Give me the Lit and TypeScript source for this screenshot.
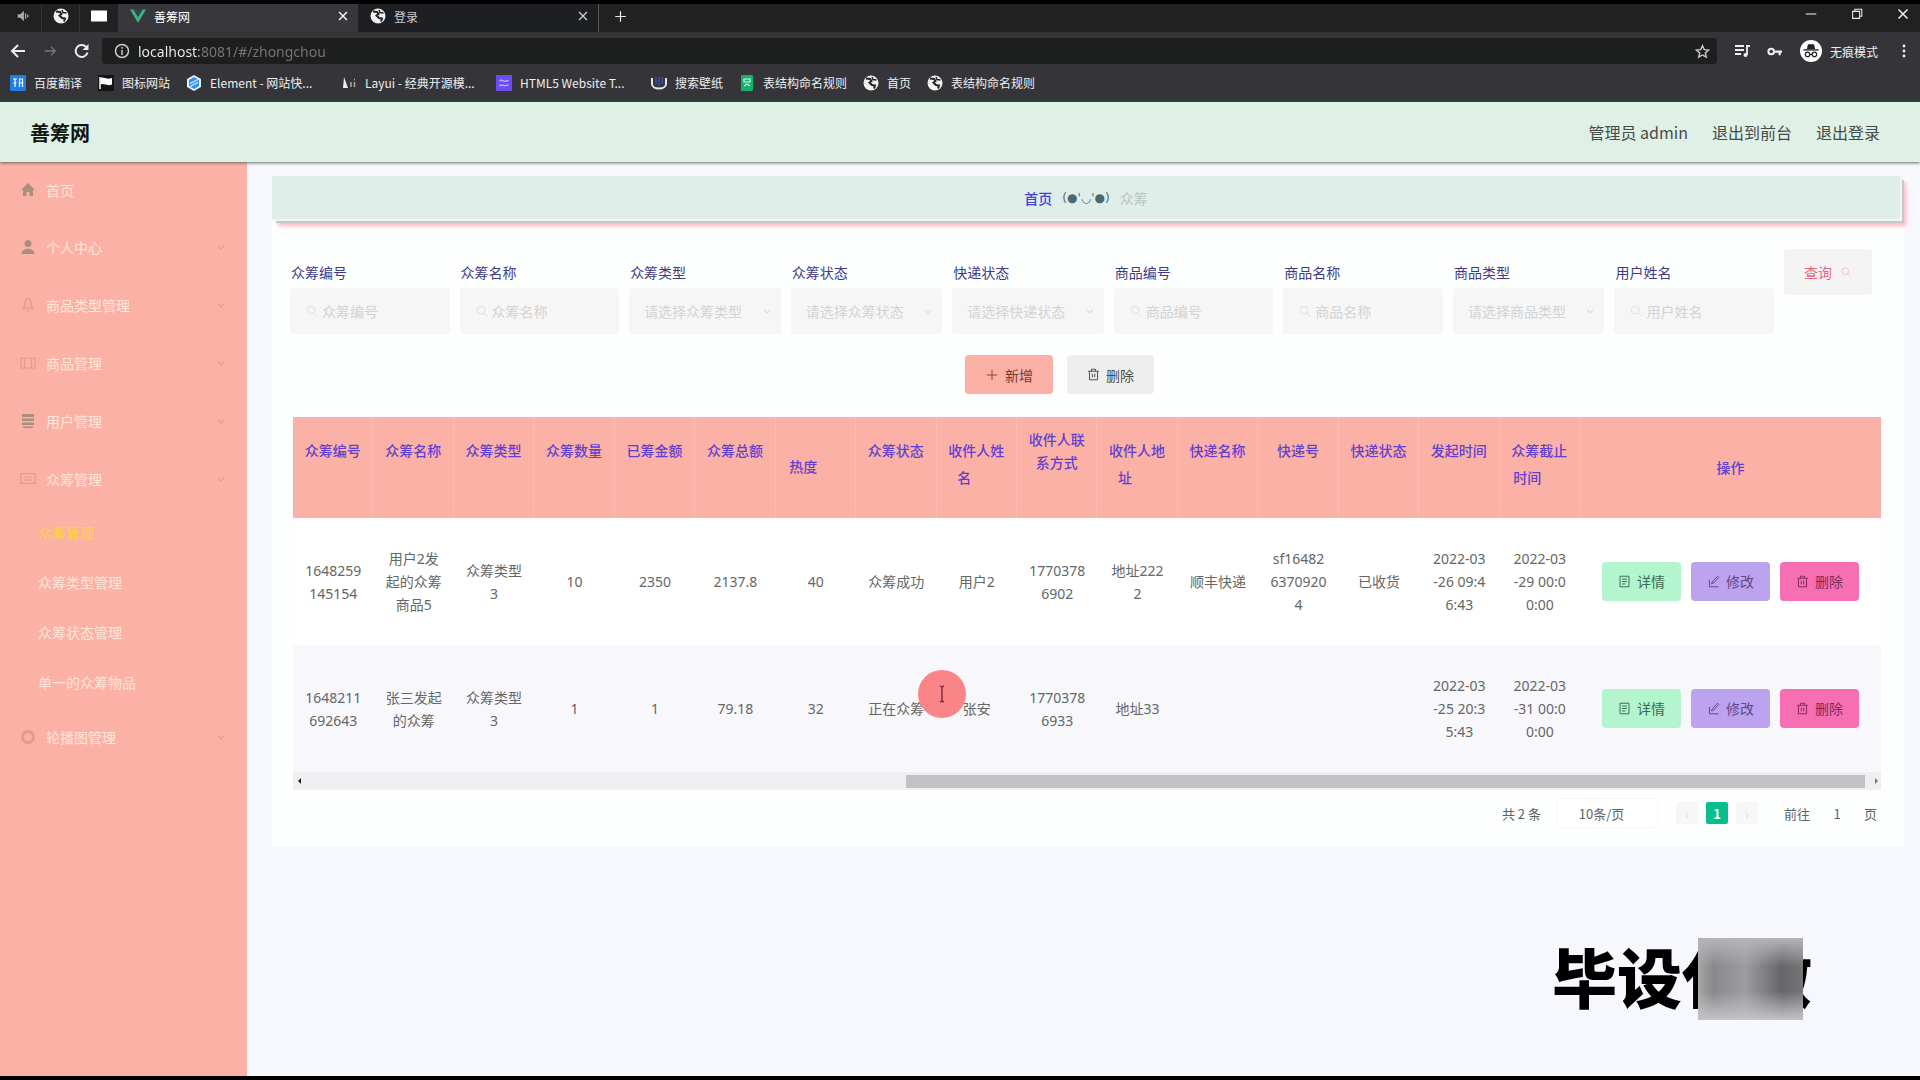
import { LitElement, html, css, svg, nothing } from "lit";
import { customElement, state } from "lit/decorators.js";
import { classMap } from "lit/directives/class-map.js";

const icon = (body: unknown, size = 16, box = 16) =>
  html`<svg width=${size} height=${size} viewBox="0 0 ${box} ${box}" fill="none" stroke="currentColor" stroke-width="1.5" aria-hidden="true">${body}</svg>`;

const I = {
  speaker: svg`<path d="M2 6v4h3l4 4V2L5 6z" fill="currentColor" stroke="none"/><path d="M11 5v6M13.5 6.500v3"/>`,
  globe: svg`<circle cx="8" cy="8" r="7.500" fill="#f1f1f1" stroke="none"/><path d="M3 3.500l4 .5 1.500 2-2 1.500 2.500 2.500 3 .5-1 3" stroke="#222" stroke-width="2"/><path d="M9 2l1 2.500 3.500.5" stroke="#222" stroke-width="1.500"/>`,
  square: svg`<path d="M0 2.500h16v11H0z" fill="#fff" stroke="none"/>`,
  vue: svg`<path d="M0 1.500h3.500L8 9l4.500-7.500H16L8 15z" fill="#3fb27f" stroke="none"/><path d="M3.500 1.500H6.500L8 4l1.500-2.500h3L8 9z" fill="#2c4a52" stroke="none"/>`,
  close: svg`<path d="M3.500 3.500l9 9M12.500 3.500l-9 9"/>`,
  plus: svg`<path d="M8 1.500v13M1.500 8h13"/>`,
  thinPlus: svg`<path d="M8 2v12M2 8h12" stroke-width="1"/>`,
  min: svg`<path d="M2 8h12" stroke-width="1.200"/>`,
  restore: svg`<path d="M3 5h8v8H3zM5.500 5V2.500h8v8H11" stroke-width="1.200"/>`,
  back: svg`<path d="M15 8H2M8 2L2 8l6 6" stroke-width="2"/>`,
  forward: svg`<path d="M2 8h12M9 3l5 5-5 5"/>`,
  reload: svg`<path d="M13.500 9.500A6 6 0 1 1 12 3.800" stroke-width="2"/><path d="M14.500 1v6h-6z" fill="currentColor" stroke="none"/>`,
  info: svg`<circle cx="8" cy="8" r="6.500"/><path d="M8 7v5M8 4v1.800"/>`,
  star: svg`<path d="M8 1.800l1.900 4.200 4.500.5-3.400 3 1 4.500L8 11.700 4 14l1-4.500-3.400-3 4.500-.5z"/>`,
  queue: svg`<path d="M1 3h9M1 7h9M1 11h6M13 12V3h3" stroke-width="1.800"/><circle cx="11.500" cy="12" r="2" fill="currentColor" stroke="none"/>`,
  key: svg`<circle cx="4.500" cy="8" r="3" stroke-width="2.200"/><path d="M7.500 8H16M13.500 8v4" stroke-width="2.400"/>`,
  incognito: svg`<circle cx="8" cy="8" r="8" fill="#fff" stroke="none"/><path d="M5 6.500l.8-3.500h4.400l.8 3.500z" fill="#222" stroke="none"/><path d="M2.500 7.200h11" stroke="#222" stroke-width="1"/><circle cx="5.500" cy="10.500" r="1.600" stroke="#222" stroke-width=".9"/><circle cx="10.500" cy="10.500" r="1.600" stroke="#222" stroke-width=".9"/><path d="M7 10.500h2" stroke="#222" stroke-width=".8"/>`,
  dots: svg`<g fill="currentColor" stroke="none"><circle cx="8" cy="3" r="1.400"/><circle cx="8" cy="8" r="1.400"/><circle cx="8" cy="13" r="1.400"/></g>`,
  translate: svg`<rect width="16" height="16" rx="1" fill="#1f7de6" stroke="none"/><path d="M3 4h4M5 4v8M3.500 8h3M9 4h4M9.500 4v8M12.500 4v8M9.500 8h3" stroke="#fff" stroke-width="1.200"/>`,
  flag: svg`<rect width="16" height="16" fill="#151515" stroke="none"/><path d="M2 2v12" stroke="#fff"/><path d="M2.500 3c3-1.500 5 2 11.500 0v6.500c-5 2-8-1.500-11.500 0z" fill="#fff" stroke="none"/>`,
  element: svg`<path d="M8 0l7 4v8l-7 4-7-4V4z" fill="#e7f3ff" stroke="none"/><path d="M8 2l5 3v6l-5 3-5-3V5z" fill="#2e8ef0" stroke="none"/><path d="M4 8.500l8-4M4 11.500l8-4" stroke="#a9d4ff"/>`,
  layui: svg`<path d="M3 2l4 11H2z" fill="#eee" stroke="none"/><path d="M10 7v5M13 4.500h1M13.500 7v5" stroke="#aaa"/>`,
  html5: svg`<rect width="16" height="16" fill="#6a4df0" stroke="none"/><path d="M3.500 6C6 3 8 9 12.500 5M3.500 11c2.500-3 5 2 9-1.500" stroke="#c4a9ff"/>`,
  wall: svg`<path d="M1 3v6c0 6 14 6 14 0V3" stroke="#e5e5f2" stroke-width="2"/><path d="M5 2v7M8 2v9M11 2v7" stroke="#3d49b5" stroke-width="1.600"/>`,
  sheet: svg`<rect x="2" width="12" height="16" rx="1" fill="#10b26c" stroke="none"/><path d="M5 4h6v3H5zM5 11l3-2 3 2" stroke="#d5ffe9" stroke-width="1.200"/>`,
  home: svg`<path d="M8 1L1 8h2v6h3.500v-4h3v4H13V8h2z" fill="currentColor" stroke="none"/>`,
  user: svg`<circle cx="8" cy="4.500" r="3.500" fill="currentColor" stroke="none"/><path d="M1.500 15c0-7 13-7 13 0z" fill="currentColor" stroke="none"/>`,
  rocket: svg`<path d="M8 1c4 3 3.500 7 2.500 10h-5C4.500 8 4 4 8 1zM5 8l-2 4h2.500M11 8l2 4h-2.500M8 12v3" stroke-width="1.200"/>`,
  ticket: svg`<path d="M1 3h14v10H1zM4.500 3v10M11.500 3v10" stroke-width="1.200"/>`,
  list: svg`<path d="M2 1h12v3H2zM2 5.500h12v2.500H2zM2 9.500h12V12H2zM3 13.500h10V15H3z" fill="currentColor" stroke="none"/>`,
  board: svg`<path d="M1 2.500h14v10H1zM4 6h8M4 9h8" stroke-width="1.200"/>`,
  ring: svg`<circle cx="8" cy="8" r="5.500" stroke-width="3"/>`,
  caret: svg`<path d="M4 6.500l4 4 4-4"/>`,
  search: svg`<circle cx="7" cy="7" r="4.500" stroke-width="1"/><path d="M10.500 10.500L14 14" stroke-width="1"/>`,
  bin: svg`<path d="M1.500 4h13M5.500 4V1.500h5V4M3 4v10.500h10V4M6.500 7v4.500M9.500 7v4.500" stroke-width="1.200"/>`,
  doc: svg`<path d="M2.500 1.500h11v13h-11zM5 5h6M5 8h6M5 11h4" stroke-width="1.200"/>`,
  edit: svg`<path d="M13 1.500l1.500 1.500L8 10l-2.500 1L6.500 8.500zM3 6v8.500h11" stroke-width="1.200"/>`,
};

const BOOKMARKS: [unknown, string, boolean][] = [
  [I.translate, "百度翻译", false],
  [I.flag, "图标网站", false],
  [I.element, "Element - 网站快...", true],
  [I.layui, "Layui - 经典开源模...", true],
  [I.html5, "HTML5 Website T...", true],
  [I.wall, "搜索壁纸", false],
  [I.sheet, "表结构命名规则", false],
  [I.globe, "首页", false],
  [I.globe, "表结构命名规则", false],
];

@customElement("browser-chrome")
class BrowserChrome extends LitElement {
  static styles = css`
    :host { display: block; background: #353539; color: #eee; border-top: 4px solid #000; border-bottom: 4px solid #2c3a36; font-size: 12px; }
    svg { display: block; flex: none; }
    button { border: 0; padding: 0; margin: 0; background: none; color: inherit; font: inherit; display: flex; align-items: center; justify-content: center; }
    .tabs { display: flex; height: 28px; background: #212121; align-items: stretch; }
    .tabs > * { padding-bottom: 4px; }
    .pin { width: 38px; border-right: 1px solid #333; }
    .pin:first-child { width: 42px; padding-left: 4px; color: #aaa; }
    .pin:nth-child(3) { border: 0; }
    .tab { width: 240px; box-sizing: border-box; padding: 0 8px 4px 12px; display: flex; align-items: center; gap: 8px; background: #1d1f22; color: #ccc; }
    .tab.on { background: #38373b; color: #fff; }
    .name { flex: 1; }
    .add { width: 44px; border-left: 1px solid #555; }
    .win { margin-left: auto; display: flex; }
    .win button { width: 46px; padding-bottom: 4px; }
    .win button:last-child { width: 40px; padding-left: 6px; }
    .bar { display: flex; height: 32px; align-items: center; box-sizing: border-box; padding: 6px 0 0 2px; }
    .nav { width: 32px; height: 26px; }
    .dim { color: #777; }
    .addr { flex: 1; display: flex; align-items: center; gap: 8px; height: 26px; margin-left: 4px; padding: 0 7px 0 12px; background: #1d1f1f; border-radius: 3px; color: #ccc; }
    .url { flex: 1; min-width: 0; border: 0; outline: 0; padding: 0; font: 14px "Noto Sans", sans-serif; -webkit-text-fill-color: transparent; background: linear-gradient(to right, #f2f2f2 61px, #77757d 61px); -webkit-background-clip: text; background-clip: text; }
    .tools { display: flex; align-items: center; padding-left: 17px; }
    .tools .q { width: 33px; justify-content: flex-start; }
    .mode { display: flex; align-items: center; justify-content: flex-start; gap: 8px; width: 88px; }
    .marks { display: flex; align-items: center; gap: 16px; height: 34px; padding: 4px 10px 0; box-sizing: border-box; }
    .mark { display: flex; align-items: center; gap: 8px; color: #eee; text-decoration: none; white-space: nowrap; line-height: 20px; }
    .wide { min-width: 139px; }
  `;
  render() {
    return html`
      <div class="tabs">
        <button class="pin" aria-label="静音">${icon(I.speaker, 14)}</button>
        <button class="pin" aria-label="标签页">${icon(I.globe)}</button>
        <button class="pin" aria-label="标签页">${icon(I.square)}</button>
        <div class="tab on">${icon(I.vue)}<span class="name">善筹网</span><button aria-label="关闭">${icon(I.close, 14)}</button></div>
        <div class="tab">${icon(I.globe)}<span class="name">登录</span><button aria-label="关闭">${icon(I.close, 14)}</button></div>
        <button class="add" aria-label="新标签页">${icon(I.plus, 13)}</button>
        <div class="win">
          <button aria-label="最小化">${icon(I.min, 14)}</button>
          <button aria-label="还原">${icon(I.restore, 14)}</button>
          <button aria-label="关闭窗口">${icon(I.close)}</button>
        </div>
      </div>
      <div class="bar">
        <button class="nav" aria-label="后退">${icon(I.back)}</button>
        <button class="nav dim" aria-label="前进">${icon(I.forward, 14)}</button>
        <button class="nav" aria-label="刷新">${icon(I.reload)}</button>
        <div class="addr">
          ${icon(I.info)}
          <input class="url" aria-label="地址" .value=${"localhost:8081/#/zhongchou"} />
          <button aria-label="收藏">${icon(I.star, 15)}</button>
        </div>
        <div class="tools">
          <button class="q" aria-label="媒体">${icon(I.queue)}</button>
          <button class="q" aria-label="密码">${icon(I.key, 15)}</button>
          <button class="mode">${icon(I.incognito, 22)}<span>无痕模式</span></button>
          <button class="nav" aria-label="菜单">${icon(I.dots)}</button>
        </div>
      </div>
      <nav class="marks">
        ${BOOKMARKS.map(([i, t, w]) => html`<a href="#" class=${classMap({ mark: true, wide: w })}>${icon(i)}<span>${t}</span></a>`)}
      </nav>
    `;
  }
}

const MENU: { i: unknown; t: string; leaf?: boolean; solid?: boolean; subs?: string[] }[] = [
  { i: I.home, t: "首页", leaf: true, solid: true },
  { i: I.user, t: "个人中心", solid: true },
  { i: I.rocket, t: "商品类型管理" },
  { i: I.ticket, t: "商品管理" },
  { i: I.list, t: "用户管理", solid: true },
  { i: I.board, t: "众筹管理", subs: ["众筹管理", "众筹类型管理", "众筹状态管理", "单一的众筹物品"] },
  { i: I.ring, t: "轮播图管理" },
];

@customElement("side-menu")
class SideMenu extends LitElement {
  static styles = css`
    :host { display: block; flex: 0 0 247px; background: #fcb1a6; font-size: 14px; }
    a { display: flex; align-items: center; color: #ffe6da; text-decoration: none; box-sizing: border-box; }
    .item { height: 58px; padding: 0 20px; gap: 10px; border-bottom: 1px solid #f9b5a9; }
    .item:first-of-type { height: 56px; }
    .ico { color: #df9b8f; display: flex; }
    .ico.solid { color: #a98f7e; }
    .arrow { margin-left: auto; color: #e79d91; display: flex; }
    .sub { height: 50px; padding: 0 0 2px 38px; }
    .sub.on { color: #ffd24a; }
  `;
  render() {
    return MENU.map(
      (m) => html`<a href="#" class="item">
          <span class=${classMap({ ico: true, solid: !!m.solid })}>${icon(m.i)}</span><span>${m.t}</span>
          ${m.leaf ? nothing : html`<span class="arrow">${icon(I.caret, 12)}</span>`}
        </a>
        ${m.subs?.map((s, n) => html`<a href="#" class=${classMap({ sub: true, on: n === 0 })}>${s}</a>`)}`
    );
  }
}

const FIELDS: [string, boolean][] = [
  ["众筹编号", false],
  ["众筹名称", false],
  ["众筹类型", true],
  ["众筹状态", true],
  ["快递状态", true],
  ["商品编号", false],
  ["商品名称", false],
  ["商品类型", true],
  ["用户姓名", false],
];

const COLUMNS = ["众筹编号", "众筹名称", "众筹类型", "众筹数量", "已筹金额", "众筹总额", "热度", "众筹状态", "收件人姓名", "收件人联系方式", "收件人地址", "快递名称", "快递号", "快递状态", "发起时间", "众筹截止时间"];

const ROWS = [
  ["1648259\n145154", "用户2发\n起的众筹\n商品5", "众筹类型\n3", "10", "2350", "2137.8", "40", "众筹成功", "用户2", "1770378\n6902", "地址222\n2", "顺丰快递", "sf16482\n6370920\n4", "已收货", "2022-03\n-26 09:4\n6:43", "2022-03\n-29 00:0\n0:00"],
  ["1648211\n692643", "张三发起\n的众筹", "众筹类型\n3", "1", "1", "79.18", "32", "正在众筹", "张安", "1770378\n6933", "地址33", "", "", "", "2022-03\n-25 20:3\n5:43", "2022-03\n-31 00:0\n0:00"],
];

@customElement("crowd-page")
class CrowdPage extends LitElement {
  @state() private page = 1;
  static styles = css`
    :host { display: block; flex: 1; min-width: 0; padding: 14px 16px 0 25px; font-size: 14px; }
    svg { display: block; flex: none; }
    button, input, select { font: inherit; border: 0; margin: 0; outline: 0; }
    .crumb { display: flex; align-items: center; justify-content: center; gap: 10px; height: 43px; margin: 0 4px 3px 0; background: #e0eee9; box-shadow: 2px 2px 0 #f2f6f1, 4px 4px 0 #c3c9c5, 6px 7px 4px #ffb9c2; position: relative; }
    .crumb a { color: #4141d8; font-weight: 500; text-decoration: none; }
    .face { color: #4a6a70; font-family: "DejaVu Sans", sans-serif; font-size: 12px; white-space: nowrap; }
    .here { color: #b9c5c0; }
    .card { background: #fdfffe; padding: 27px 23px 18px 18px; }
    .search { display: flex; align-items: flex-start; gap: 10px; }
    .field { flex: 159 1 0; min-width: 0; padding-top: 12px; display: flex; flex-direction: column; gap: 5px; }
    .field.pick { flex-grow: 151; }
    .field label { line-height: 22px; color: #3f3a86; padding-left: 1px; }
    .box { display: flex; align-items: center; height: 46px; background: #f6f6f6; border-radius: 4px; padding: 0 8px 0 15px; gap: 3px; color: #dedede; }
    .box input, .box select { flex: 1; min-width: 0; width: 100%; background: none; color: #d3d3d3; padding: 0; appearance: none; height: 46px; }
    .box input::placeholder { color: #d3d3d3; }
    .query { display: flex; align-items: center; justify-content: center; gap: 8px; width: 88px; height: 46px; background: #f4f4f4; color: #e8667c; border-radius: 4px; margin: 0 9px 0 0; padding: 0; }
    .query svg { color: #f3b7bf; }
    .tools { display: flex; justify-content: center; gap: 14px; padding: 21px 52px 23px 0; }
    .btn { display: inline-flex; align-items: center; justify-content: center; gap: 6px; height: 39px; padding: 0 20px; border-radius: 4px; color: #4c4c4c; background: #eee; white-space: nowrap; }
    .btn.add { background: #fdb0a6; color: #6d3d35; }
    .btn.see { background: #b4f5cf; color: #3b6b50; }
    .btn.mod { background: #bda2f0; color: #5c4a88; }
    .btn.del { background: #f76fb2; color: #7d2c5a; }
    .wrap { padding-left: 3px; }
    table { width: 100%; table-layout: fixed; border-collapse: separate; border-spacing: 0; color: #666; }
    th, td { padding: 0 10px; line-height: 23px; text-align: center; word-break: break-all; font-weight: 400; }
    th { height: 101px; background: #fcb1a6; color: #633fd0; font-weight: 500; border-right: 1px solid #fdbcb2; }
    th:last-child { border-right: 0; }
    .ops { width: 281px; }
    .sort { display: inline-block; width: 24px; height: 34px; vertical-align: middle; }
    td { height: 127px; white-space: pre-line; background: #fefffe; font-family: "Noto Sans", "Noto Sans CJK SC", sans-serif; }
    tr:nth-child(2) td { background: #f7f7fc; }
    .acts { display: flex; justify-content: center; gap: 10px; white-space: nowrap; font-family: "Noto Sans CJK SC", sans-serif; }
    .acts .btn { padding: 0 16px; }
    .scroll { display: flex; align-items: center; height: 18px; padding: 0 3px 0 5px; background: #efeff1; }
    .left, .right { width: 0; height: 0; border: 3px solid transparent; }
    .left { border-right-color: #222; border-left-width: 0; }
    .right { border-left-color: #777; border-right-width: 0; }
    .track { flex: 1; margin: 0 10px 0 0; display: flex; justify-content: flex-end; }
    .thumb { height: 13px; width: 61.3%; background: #c2c2c4; }
    .pager { display: flex; align-items: center; justify-content: flex-end; height: 32px; padding: 7px 4px 0 0; font-size: 13px; color: #606266; }
    .pager select { width: 101px; height: 30px; margin: 0 14px 0 16px; background: #fff; border: 1px solid #f6f6f8; border-radius: 3px; appearance: none; text-align: center; color: #606266; padding: 0 22px 0 10px; }
    .pager button { width: 22px; height: 22px; margin: 0 4px; padding: 0; background: #f7f7f7; color: #ddd; border-radius: 2px; }
    .pager .now { background: #06bf8c; color: #fff; font-weight: 700; }
    .pager .goto { display: flex; align-items: center; margin-left: 22px; }
    .pager input { width: 40px; text-align: center; background: none; color: #606266; padding: 0; margin: 0 7px 0 7px; }
  `;
  render() {
    return html`
      <nav class="crumb"><a href="#">首页</a><span class="face">(●'◡'●)</span><span class="here">众筹</span></nav>
      <section class="card">
        <form class="search" @submit=${(e: Event) => e.preventDefault()}>
          ${FIELDS.map(([t, pick], n) => html`<div class=${classMap({ field: true, pick })}>
            <label for="f${n}">${t}</label>
            <div class="box">
              ${pick
                ? html`<select id="f${n}"><option>请选择${t}</option></select>${icon(I.caret, 12)}`
                : html`${icon(I.search, 14)}<input id="f${n}" placeholder=${t} />`}
            </div>
          </div>`)}
          <button class="query">查询${icon(I.search, 12)}</button>
        </form>
        <div class="tools">
          <button class="btn add">${icon(I.thinPlus, 14)}新增</button>
          <button class="btn">${icon(I.bin, 13)}删除</button>
        </div>
        <div class="wrap">
          <table>
            <thead><tr>
              ${COLUMNS.map((c) => html`<th>${c}<span class="sort"></span></th>`)}
              <th class="ops">操作</th>
            </tr></thead>
            <tbody>
              ${ROWS.map((r) => html`<tr>${r.map((c) => html`<td>${c}</td>`)}<td><div class="acts"><button class="btn see">${icon(I.doc, 13)}详情</button><button class="btn mod">${icon(I.edit, 13)}修改</button><button class="btn del">${icon(I.bin, 13)}删除</button></div></td></tr>`)}
            </tbody>
          </table>
          <div class="scroll"><span class="left"></span><div class="track"><div class="thumb"></div></div><span class="right"></span></div>
        </div>
        <div class="pager">
          <span>共 2 条</span>
          <select aria-label="每页条数"><option>10条/页</option></select>
          <button aria-label="上一页">‹</button>
          <button class="now">${this.page}</button>
          <button aria-label="下一页">›</button>
          <label class="goto">前往<input .value=${String(this.page)} />页</label>
        </div>
      </section>
    `;
  }
}

@customElement("app-root")
class AppRoot extends LitElement {
  static styles = css`
    :host { display: flex; flex-direction: column; min-height: 100vh; box-sizing: border-box; position: relative; overflow: hidden; border-bottom: 4px solid #000; background: #f7f8fd; font-family: "Noto Sans CJK SC", "Noto Sans", sans-serif; }
    .top { display: flex; align-items: center; height: 60px; padding: 0 40px 0 30px; background: #dff0e6; color: #444c48; box-shadow: 0 1px 3px #5f6b66; position: relative; font-size: 16px; }
    .brand { margin: 0; font-size: 20px; color: #10160f; font-weight: 700; }
    .links { margin-left: auto; display: flex; gap: 24px; }
    .links a { color: inherit; text-decoration: none; }
    .body { display: flex; flex: 1; }
    .spot { position: absolute; left: 918px; top: 670px; width: 48px; height: 48px; border-radius: 50%; background: #fa7c7fee; color: #803038; display: flex; align-items: center; justify-content: center; }
    .mark { position: absolute; right: 108px; bottom: 56px; height: 82px; font-size: 65px; font-weight: 900; color: #000; line-height: 74px; }
    .veil { position: absolute; right: 9px; top: 0; width: 105px; height: 82px; background: linear-gradient(to bottom, #b5b5b8 0%, #b5b5b800 35%, #c4c4c600 65%, #c4c4c6 100%), linear-gradient(to right, #a6a6a9, #88888b 15%, #9d9da0 45%, #666669 80%, #767679); }
  `;
  render() {
    return html`
      <browser-chrome></browser-chrome>
      <header class="top">
        <h1 class="brand">善筹网</h1>
        <nav class="links"><span>管理员 admin</span><a href="#">退出到前台</a><a href="#">退出登录</a></nav>
      </header>
      <div class="body"><side-menu></side-menu><crowd-page></crowd-page></div>
      <div class="spot"><svg width="10" height="18" viewBox="0 0 10 18" fill="none" stroke="currentColor" stroke-width="1.500"><path d="M5 2v14M3 1l2 1 2-1M3 17l2-1 2 1" /></svg></div>
      <div class="mark">毕设代做<div class="veil"></div></div>
    `;
  }
}
